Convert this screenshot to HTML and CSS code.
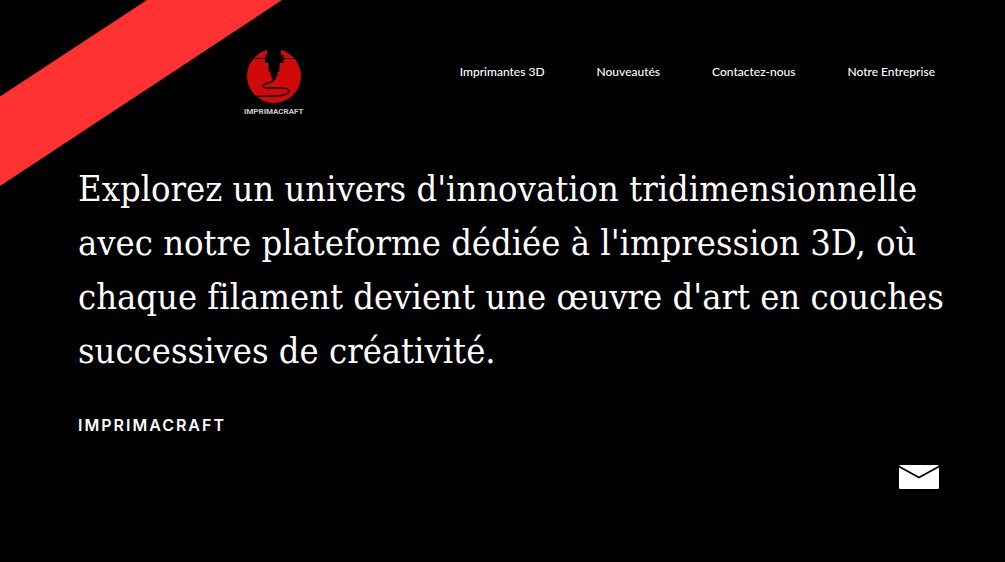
FILE: index.html
```html
<!DOCTYPE html>
<html lang="fr">
<head>
<meta charset="utf-8">
<meta name="viewport" content="width=device-width, initial-scale=1">
<title>Imprimacraft</title>
<link rel="stylesheet" href="styles.css">
</head>
<body>
<svg class="ribbon" viewBox="0 0 282 187" aria-hidden="true"><path d="M147 0H282L0 186V96.500Z" fill="#ff3131"/></svg>
<div class="page">
  <header class="header">
    <a class="logo" href="#" aria-label="Imprimacraft">
      <svg class="logo-mark" viewBox="0 0 56 56" aria-hidden="true">
        <circle cx="28" cy="28" r="27" fill="#d00909"/>
        <path d="M21 0H35V7H37.500V15H33.500V23.500H31.500V27L29 32H27L24.500 27V23.500H22.500V15H19V7H21Z" fill="#000"/>
        <path d="M5 10.500H51" stroke="#000" stroke-width="1.200"/>
        <path d="M28 30C29 36 17 34 17 38C17 42.500 43 37 43 43C43 49 26 48 9 48.500" fill="none" stroke="#000" stroke-width="1.400"/>
      </svg>
      <span class="logo-name">IMPRIMACRAFT</span>
    </a>
    <nav class="nav" aria-label="Navigation principale">
      <a href="#">Imprimantes 3D</a>
      <a href="#">Nouveautés</a>
      <a href="#">Contactez-nous</a>
      <a href="#">Notre Entreprise</a>
    </nav>
  </header>
  <main class="hero">
    <h1 class="title">Explorez un univers d'innovation tridimensionnelle avec notre plateforme dédiée à l'impression 3D, où chaque filament devient une œuvre d'art en couches successives de créativité.</h1>
    <p class="brand">IMPRIMACRAFT</p>
  </main>
  <footer class="footer">
    <a class="mail" href="#" aria-label="Nous écrire">
      <svg class="mail-icon" viewBox="0 0 40 24" aria-hidden="true">
        <rect width="40" height="24" rx="1.500" fill="#fff"/>
        <path d="M0 1.500L20 12.500L40 1.500" fill="none" stroke="#000" stroke-width="1.800"/>
      </svg>
    </a>
  </footer>
</div>
</body>
</html>
```
FILE: styles.css
```css
* { box-sizing: border-box; }

body {
  margin: 0;
  background: #000;
  color: #fff;
  font-family: Lato, "Liberation Sans", sans-serif;
}

a { color: inherit; text-decoration: none; }
svg { display: block; }

.ribbon {
  position: absolute;
  top: 0;
  left: 0;
  z-index: -1;
  width: 282px;
}

.page { padding: 48px 40px 0 78px; }

.header {
  display: flex;
  justify-content: space-between;
  align-items: flex-start;
  padding: 0 30px 0 166px;
}

.logo {
  display: flex;
  flex-direction: column;
  align-items: center;
}

.logo-mark { width: 56px; }

.logo-name {
  margin-top: 2px;
  color: #ccc;
  font: 700 8px/12px Roboto, sans-serif;
}

.nav {
  display: flex;
  gap: 52px;
  padding-top: 16px;
  font: 500 12px/16px Lato, sans-serif;
}

.hero { padding-top: 44px; }

.title {
  margin: 0;
  font: 400 36px/54px "DejaVu Serif Condensed", "Liberation Serif", serif;
  font-variant-ligatures: none;
}

.brand {
  margin: 35px 0 0;
  font: 600 16px/24px Inter, sans-serif;
  letter-spacing: 2px;
}

.footer {
  display: flex;
  justify-content: flex-end;
  padding: 28px 26px 0 0;
}

.mail-icon { width: 40px; }
```
